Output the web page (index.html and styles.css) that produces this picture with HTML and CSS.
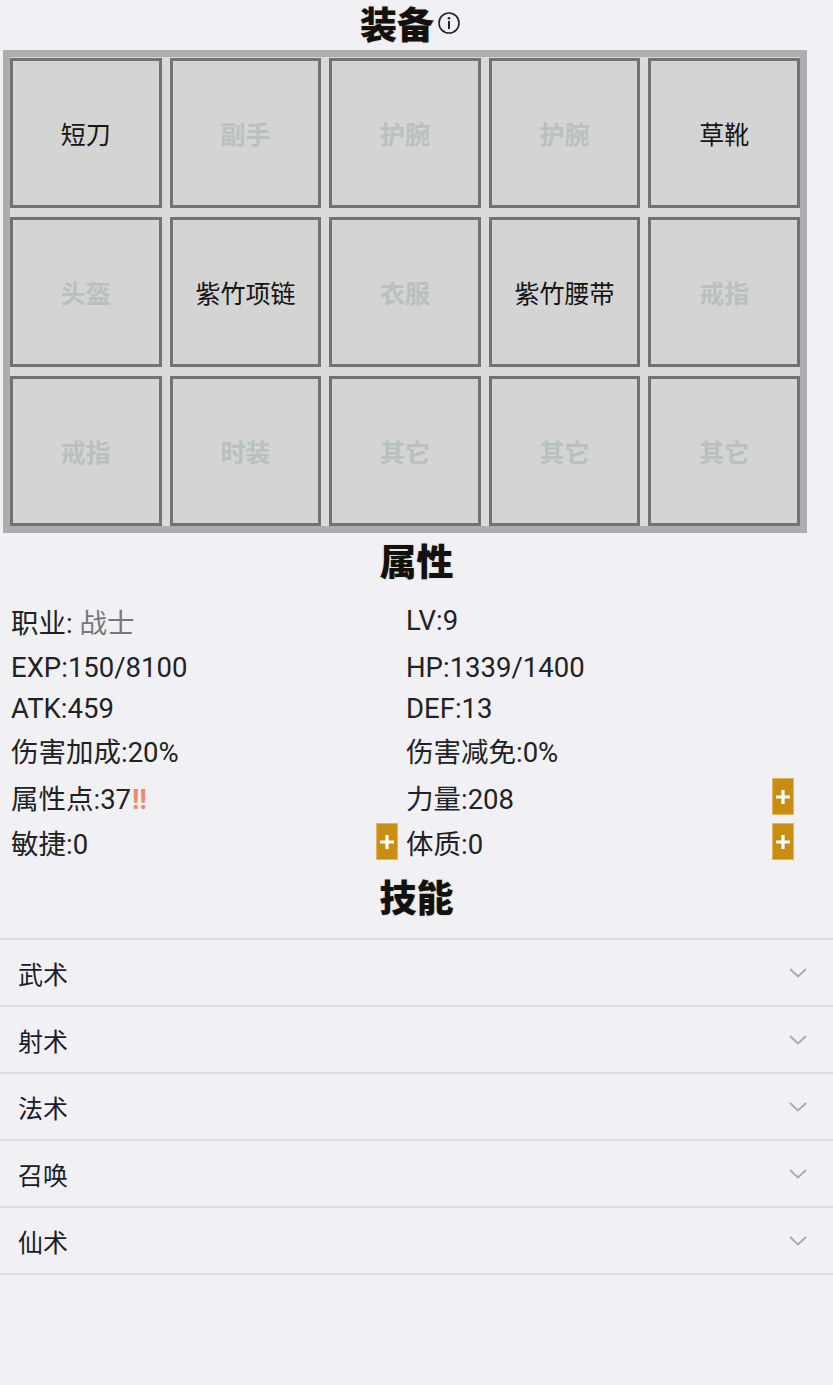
FILE: index.html
```html
<!DOCTYPE html>
<html>
<head>
  <meta charset="UTF-8" />
  <title>角色</title>
  <link rel="stylesheet" href="styles.css">
</head>
<body>
  <h2 class="title title-equip">装备<svg class="info" width="24" height="24" viewBox="0 0 24 24"><circle cx="12" cy="12" r="10" fill="none" stroke="#222" stroke-width="1.6"/><circle cx="12" cy="7.2" r="1.3" fill="#222"/><rect x="11" y="10" width="2" height="8" fill="#222"/></svg></h2>

  <div class="equip-frame">
    <div class="slot filled">短刀</div>
    <div class="slot">副手</div>
    <div class="slot">护腕</div>
    <div class="slot">护腕</div>
    <div class="slot filled">草靴</div>
    <div class="slot">头盔</div>
    <div class="slot filled">紫竹项链</div>
    <div class="slot">衣服</div>
    <div class="slot filled">紫竹腰带</div>
    <div class="slot">戒指</div>
    <div class="slot">戒指</div>
    <div class="slot">时装</div>
    <div class="slot">其它</div>
    <div class="slot">其它</div>
    <div class="slot">其它</div>
  </div>

  <h2 class="title title-attr">属性</h2>

  <div class="attrs">
    <div class="attr first"><span>职业: <span class="muted">战士</span></span></div>
    <div class="attr first"><span>LV:9</span></div>
    <div class="attr"><span>EXP:150/8100</span></div>
    <div class="attr"><span>HP:1339/1400</span></div>
    <div class="attr"><span>ATK:459</span></div>
    <div class="attr"><span>DEF:13</span></div>
    <div class="attr"><span>伤害加成:20%</span></div>
    <div class="attr"><span>伤害减免:0%</span></div>
    <div class="attr tall gap"><span>属性点:37<span class="warn">‼</span></span></div>
    <div class="attr tall gap"><span>力量:208</span><button class="plus"><svg width="16" height="16" viewBox="0 0 16 16"><path d="M8 1v14M1 8h14" stroke="#fff" stroke-width="3.2"/></svg></button></div>
    <div class="attr tall"><span>敏捷:0</span><button class="plus"><svg width="16" height="16" viewBox="0 0 16 16"><path d="M8 1v14M1 8h14" stroke="#fff" stroke-width="3.2"/></svg></button></div>
    <div class="attr tall"><span>体质:0</span><button class="plus"><svg width="16" height="16" viewBox="0 0 16 16"><path d="M8 1v14M1 8h14" stroke="#fff" stroke-width="3.2"/></svg></button></div>
  </div>

  <h2 class="title title-skill">技能</h2>

  <ul class="skills">
    <li>武术<svg class="chev" width="18" height="10" viewBox="0 0 18 10"><polyline points="1,1 9,8.5 17,1" fill="none" stroke="#a9a9b2" stroke-width="1.8"/></svg></li>
    <li>射术<svg class="chev" width="18" height="10" viewBox="0 0 18 10"><polyline points="1,1 9,8.5 17,1" fill="none" stroke="#a9a9b2" stroke-width="1.8"/></svg></li>
    <li>法术<svg class="chev" width="18" height="10" viewBox="0 0 18 10"><polyline points="1,1 9,8.5 17,1" fill="none" stroke="#a9a9b2" stroke-width="1.8"/></svg></li>
    <li>召唤<svg class="chev" width="18" height="10" viewBox="0 0 18 10"><polyline points="1,1 9,8.5 17,1" fill="none" stroke="#a9a9b2" stroke-width="1.8"/></svg></li>
    <li>仙术<svg class="chev" width="18" height="10" viewBox="0 0 18 10"><polyline points="1,1 9,8.5 17,1" fill="none" stroke="#a9a9b2" stroke-width="1.8"/></svg></li>
  </ul>
</body>
</html>
```

FILE: styles.css
```css
body {
  margin: 0;
  background-color: #f0f0f5;
  font-family: Roboto, "Noto Sans CJK SC", sans-serif;
  color: #222;
}

.title {
  margin: 0;
  text-align: center;
  font-family: "Noto Sans CJK SC", sans-serif;
  font-size: 37px;
  font-weight: 900;
  line-height: 54px;
  color: #111;
  text-shadow: 0 0 2px rgba(230, 150, 60, 0.45);
}

.title-equip {
  line-height: 46px;
  margin-bottom: 4px;
  padding-right: 12px;
}

.title-equip .info {
  vertical-align: 4px;
  margin-left: 3px;
}

.title-attr {
  margin-bottom: 13px;
}

.title-skill {
  margin-top: 5px;
  margin-bottom: 15px;
}

/* equipment slots */
.equip-frame {
  display: grid;
  grid-template-columns: repeat(5, 1fr);
  grid-auto-rows: 150px;
  column-gap: 8px;
  row-gap: 9px;
  width: 790px;
  margin-left: 3px;
  padding-top: 1px;
  border: 7px solid #adadad;
  background-color: #dadada;
}

.slot {
  display: flex;
  justify-content: center;
  align-items: center;
  border: 3px solid #727272;
  background-color: #d4d4d4;
  font-family: "Noto Sans CJK SC", sans-serif;
  font-size: 25px;
  font-weight: 700;
  color: #b8c1bc;
}

.slot.filled {
  font-weight: 400;
  color: #151515;
}

/* attributes */
.attrs {
  display: grid;
  grid-template-columns: 387px 388px;
  column-gap: 8px;
  padding-left: 11px;
}

.attr {
  display: flex;
  justify-content: space-between;
  align-items: center;
  height: 41px;
  font-size: 27.5px;
}

.attr.first {
  margin-bottom: 6px;
}

.attr.tall {
  height: 45px;
}

.attr.gap {
  margin-top: 4px;
}

.muted {
  color: #777;
}

.warn {
  color: #ec8a62;
  font-weight: 700;
  margin-left: 1px;
}

.plus {
  display: flex;
  justify-content: center;
  align-items: center;
  width: 22px;
  height: 37px;
  padding: 0;
  border: 1px solid #e0b45a;
  background-color: #c78e12;
}

/* skills */
.skills {
  list-style: none;
  margin: 0;
  padding: 0;
  border-bottom: 2px solid #dcdce2;
}

.skills li {
  display: flex;
  justify-content: space-between;
  align-items: center;
  height: 65px;
  padding: 0 26px 0 18px;
  border-top: 2px solid #dcdce2;
  font-family: "Noto Sans CJK SC", sans-serif;
  font-size: 25px;
  color: #1b1b2c;
}
```
